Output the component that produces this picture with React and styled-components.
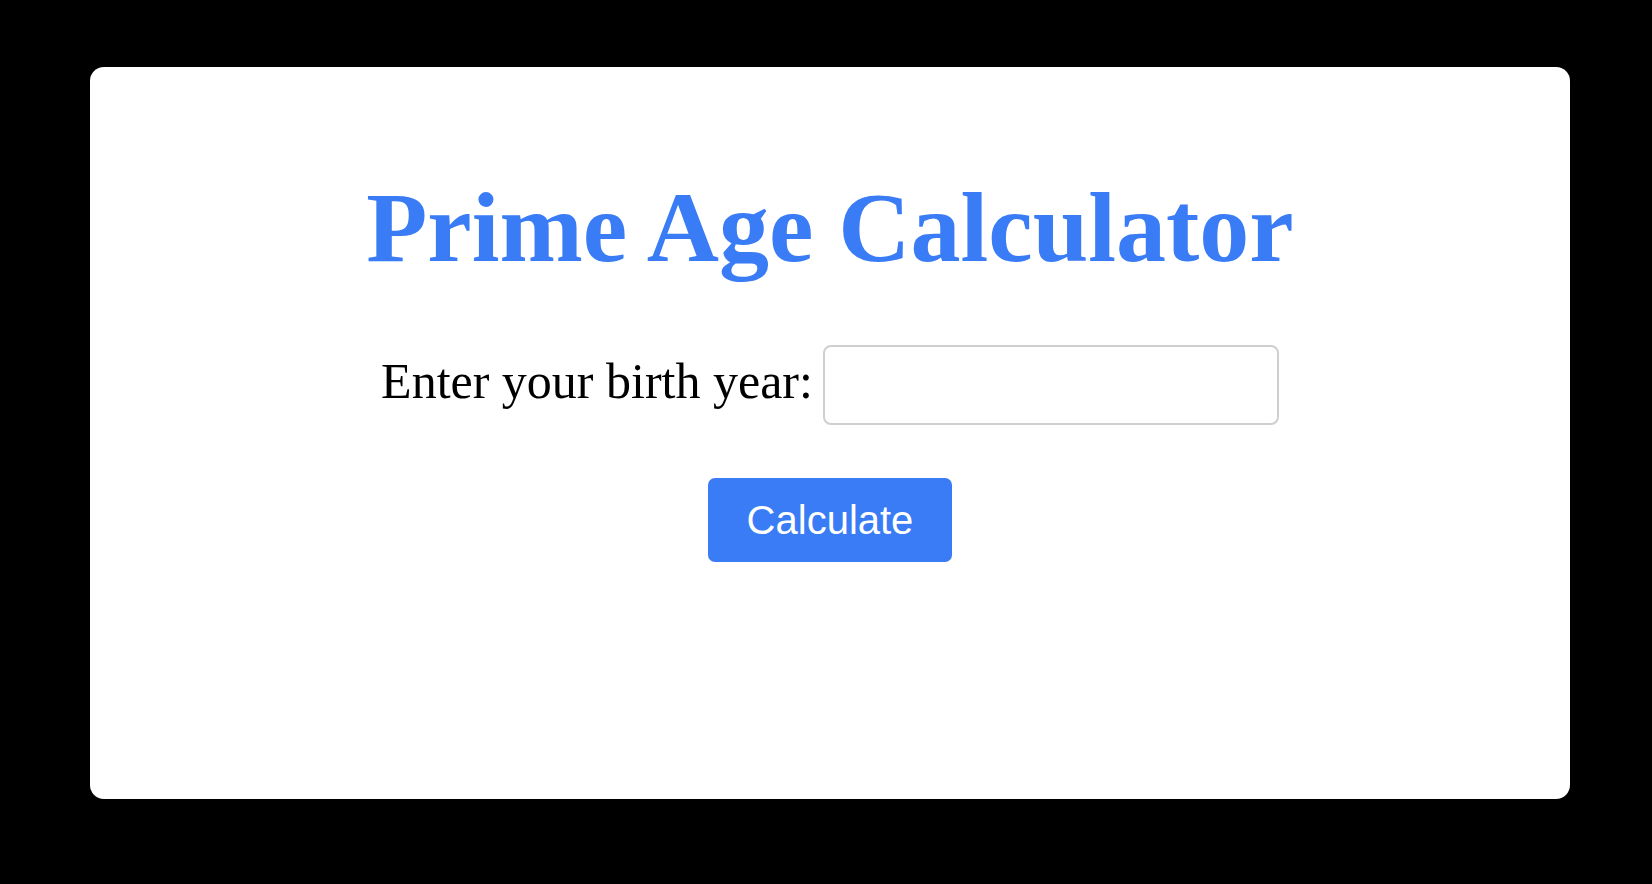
import React from 'react';
import styled, { createGlobalStyle } from 'styled-components';

const GlobalStyle = createGlobalStyle`
  html, body {
    margin: 0;
    padding: 0;
    background: #000;
  }
`;

const Page = styled.div`
  width: 1652px;
  height: 884px;
  box-sizing: border-box;
  padding: 67px 82px 0 90px;
  background: #000;
`;

const Card = styled.div`
  height: 732px;
  background: #fff;
  border-radius: 14px;
  display: flex;
  flex-direction: column;
  align-items: center;
  padding-top: 101px;
  box-sizing: border-box;
`;

const Title = styled.h1`
  margin: 0;
  font-family: "Liberation Serif", "Times New Roman", serif;
  font-weight: bold;
  font-size: 100px;
  line-height: 120px;
  color: #3a7cf5;
`;

const Row = styled.div`
  display: flex;
  align-items: center;
  gap: 10px;
  margin-top: 57px;
`;

const Label = styled.label`
  font-family: "Liberation Serif", "Times New Roman", serif;
  font-size: 50px;
  line-height: 60px;
  color: #000;
  margin-bottom: 8px;
`;

const YearInput = styled.input`
  width: 456px;
  height: 80px;
  box-sizing: border-box;
  border: 2px solid #cfcfcf;
  border-radius: 8px;
  padding: 0 16px;
  font-size: 40px;
  font-family: "Liberation Sans", Arial, sans-serif;
  outline: none;
`;

const Button = styled.button`
  margin-top: 53px;
  height: 84px;
  padding: 0 39px;
  border: none;
  border-radius: 7px;
  background: #3a7cf5;
  color: #fff;
  font-family: "Liberation Sans", Arial, sans-serif;
  font-size: 40px;
  line-height: 46px;
  cursor: pointer;
`;

export default function App() {
  return (
    <>
      <GlobalStyle />
      <Page>
        <Card>
          <Title>Prime Age Calculator</Title>
          <Row>
            <Label htmlFor="year">Enter your birth year:</Label>
            <YearInput id="year" type="text" />
          </Row>
          <Button>Calculate</Button>
        </Card>
      </Page>
    </>
  );
}
